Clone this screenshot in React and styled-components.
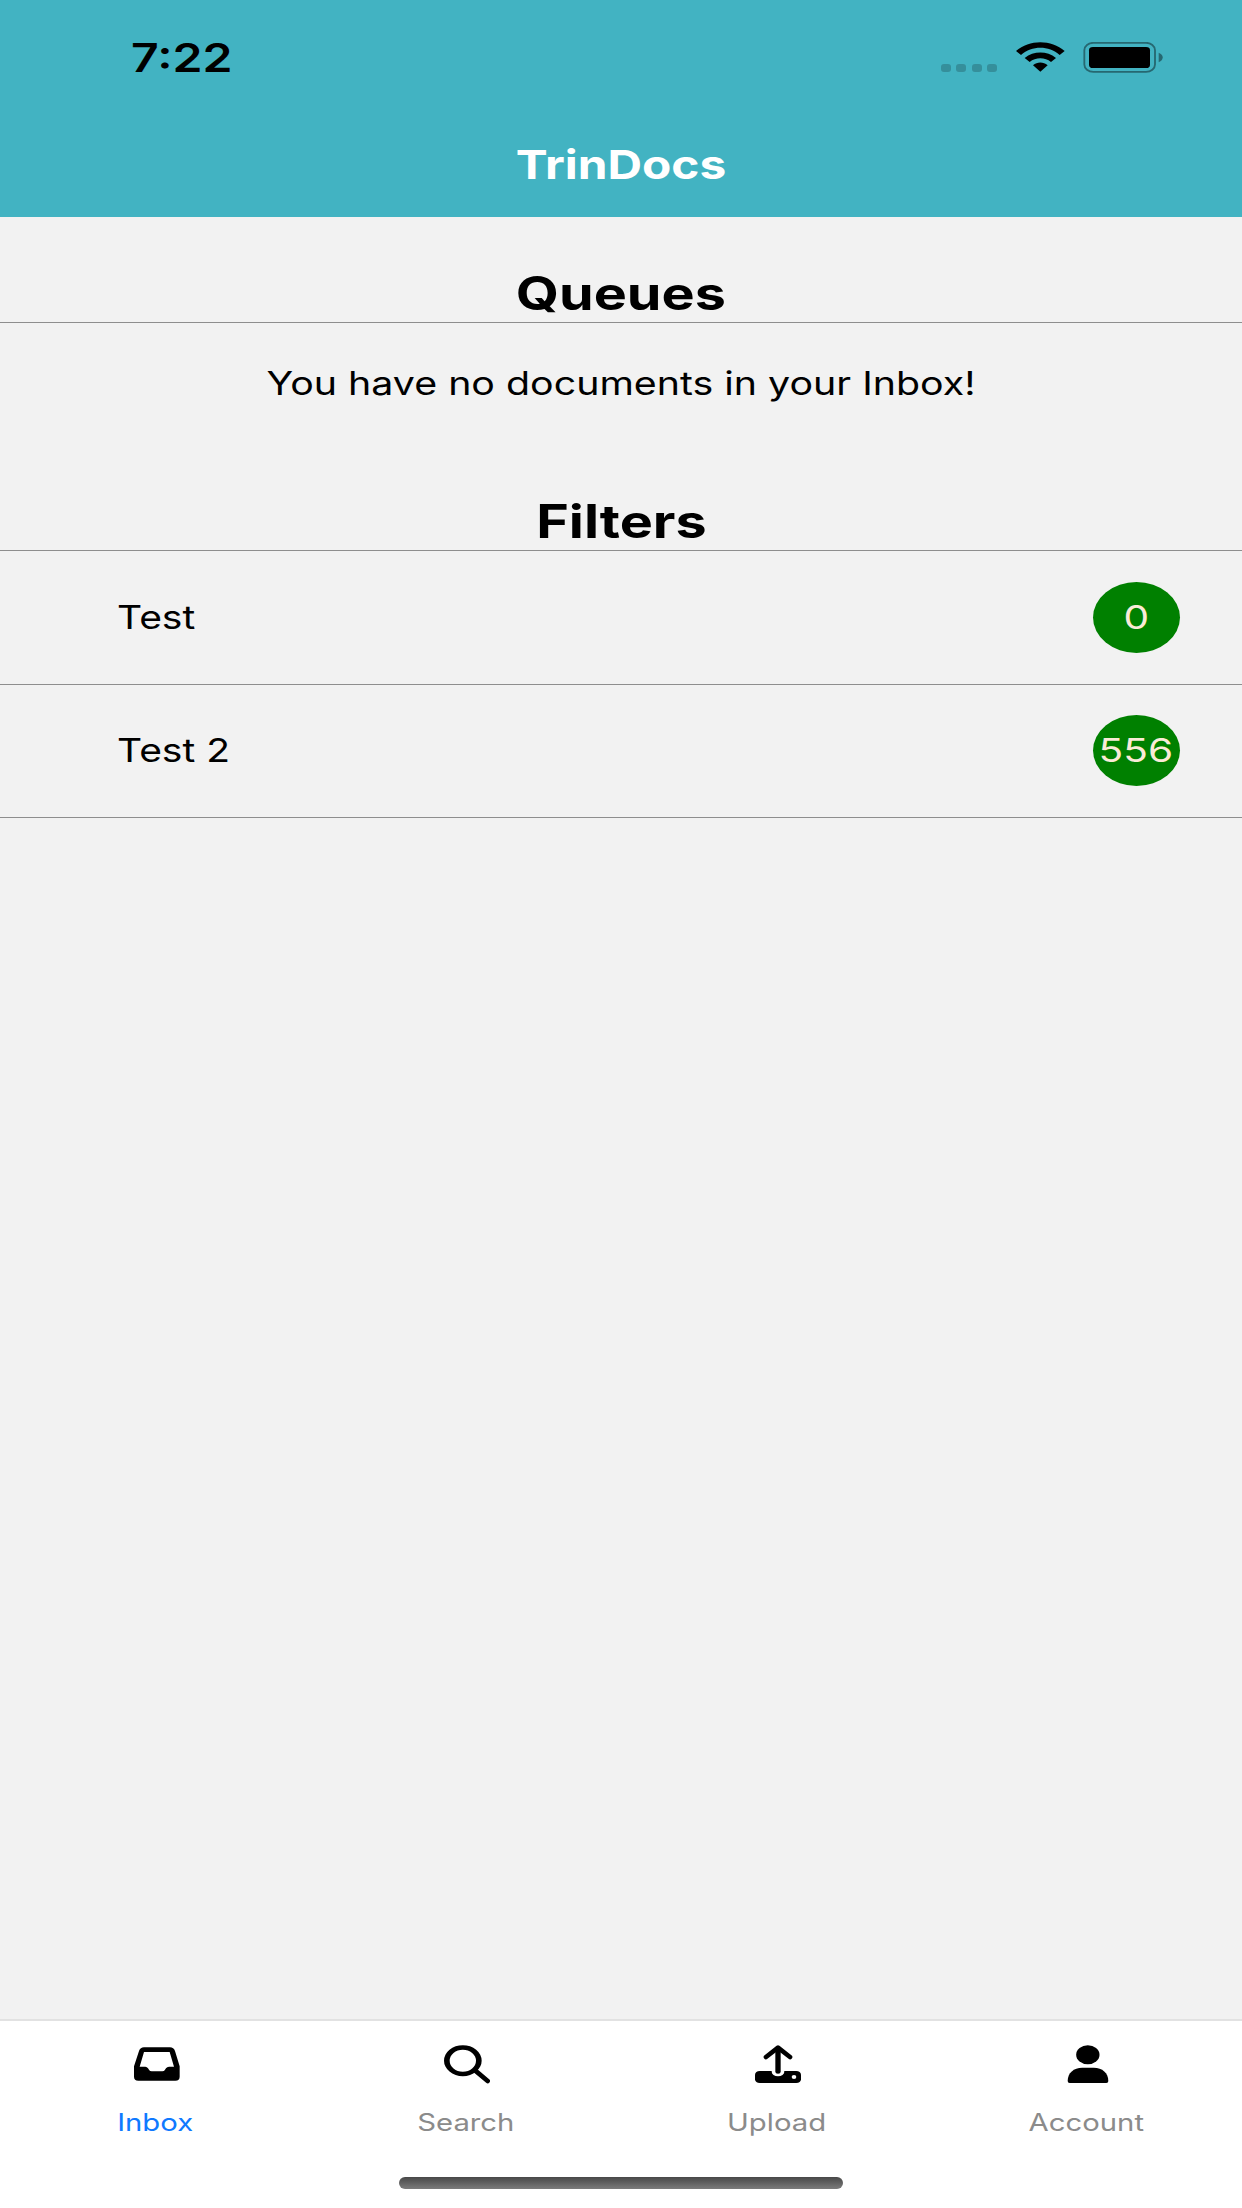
import React, { useState } from "react";
import styled, { createGlobalStyle } from "styled-components";

const filters = [
  { name: "Test", count: 0 },
  { name: "Test 2", count: 556 },
];

const InboxIcon = () => (
  <TabIcon viewBox="132 120 138 116">
    <path
      fillRule="evenodd"
      d="M162 127H240Q251 127 255 138L269 184V215Q269 227 256 227H145Q132 227 132 215V184L147 138Q151 127 162 127ZM162 141L149 185H166Q171 185 174 190L178 196Q180 199 185 199H217Q222 199 224 196L228 190Q231 185 237 185H252L239 141Z"
    />
  </TabIcon>
);

const SearchIcon = () => (
  <TabIcon viewBox="162 120 138 116">
    <path
      fillRule="evenodd"
      d="M162 167A56.5 46.5 0 1 0 275 167A56.5 46.5 0 1 0 162 167ZM179 167A39.5 33 0 1 1 258 167A39.5 33 0 1 1 179 167Z"
    />
    <path d="M256 197L293 228" stroke="#000" strokeWidth="14" strokeLinecap="round" />
  </TabIcon>
);

const UploadIcon = () => (
  <TabIcon viewBox="164 120 138 116">
    <rect x="164" y="198" width="138" height="36" rx="14" ry="11" />
    <ellipse cx="233" cy="200" rx="19" ry="14" fill="#fff" />
    <ellipse cx="281" cy="216" rx="7" ry="6" fill="#fff" />
    <rect x="225" y="124" width="16" height="82" rx="8" ry="6" />
    <path
      d="M197 156L233 128L269 156"
      fill="none"
      stroke="#000"
      strokeWidth="14"
      strokeLinecap="round"
      strokeLinejoin="round"
    />
  </TabIcon>
);

const AccountIcon = () => (
  <TabIcon viewBox="166 120 138 116">
    <ellipse cx="234.500" cy="149" rx="35" ry="28.500" />
    <path d="M174 228C174 204 192 188 218 188H252C278 188 296 204 296 228Q296 234 290 234H180Q174 234 174 228Z" />
  </TabIcon>
);

const tabs = [
  { name: "Inbox", icon: InboxIcon },
  { name: "Search", icon: SearchIcon },
  { name: "Upload", icon: UploadIcon },
  { name: "Account", icon: AccountIcon },
];

const App = () => {
  const [active, setActive] = useState("Inbox");

  return (
    <Screen>
      <GlobalStyle />
      <Header>
        <StatusBar>
          <Time $scale={1.235}>7:22</Time>
          <StatusIcons>
            <Dots>
              <i />
              <i />
              <i />
              <i />
            </Dots>
            <svg width="49" height="30" viewBox="288 68 147 90">
              <path d="M288 95C328 60 394 60 434 95L419 107C386 78 336 78 303 107Z" />
              <path d="M314 116C341 94 381 94 408 116L393 128C375 113 347 113 329 128Z" />
              <path d="M339 138C352 127 370 127 383 138L361 157Z" />
            </svg>
            <svg width="80" height="31" viewBox="489 66 240 93">
              <rect
                x="493"
                y="68.500"
                width="212"
                height="87"
                rx="27"
                ry="22"
                fill="none"
                stroke="#266871"
                strokeWidth="5.500"
              />
              <rect x="507" y="81" width="183" height="63" rx="12" ry="10" />
              <path d="M716 98Q728 103 728 112Q728 122 716 127Z" fill="#266871" />
            </svg>
          </StatusIcons>
        </StatusBar>
        <Title $scale={1.195}>TrinDocs</Title>
      </Header>
      <Main>
        <Section $height={106}>
          <SectionTitle>Queues</SectionTitle>
        </Section>
        <Message $scale={1.21}>You have no documents in your Inbox!</Message>
        <Section $height={108}>
          <SectionTitle>Filters</SectionTitle>
        </Section>
        {filters.map((filter) => (
          <FilterRow key={filter.name}>
            <FilterName $scale={1.2}>{filter.name}</FilterName>
            <Badge>
              <Count $scale={1.25}>{filter.count}</Count>
            </Badge>
          </FilterRow>
        ))}
      </Main>
      <TabBar>
        <Tabs>
          {tabs.map(({ name, icon: Icon }) => (
            <Tab key={name} onClick={() => setActive(name)}>
              <Icon />
              <TabLabel $active={active === name}>{name}</TabLabel>
            </Tab>
          ))}
        </Tabs>
        <HomeIndicator />
      </TabBar>
    </Screen>
  );
};

const GlobalStyle = createGlobalStyle`
  * {
    box-sizing: border-box;
  }
  body {
    margin: 0;
    font-family: Inter, "Liberation Sans", sans-serif;
  }
`;

const Screen = styled.div`
  display: flex;
  flex-direction: column;
  width: 1242px;
  height: 2208px;
  overflow: hidden;
  background: #f2f2f2;
  color: #000;
`;

const Header = styled.header`
  height: 217px;
  background: #42b3c2;
`;

const StatusBar = styled.div`
  display: flex;
  justify-content: space-between;
  height: 116px;
  padding: 0 79px 0 131px;
`;

const Wide = styled.span`
  display: block;
  white-space: nowrap;
  transform: scaleX(${(props) => props.$scale || 1.22});
`;

const Time = styled(Wide)`
  padding-top: 34px;
  font-size: 39px;
  font-weight: 600;
  line-height: 48px;
  transform-origin: left;
`;

const StatusIcons = styled.div`
  display: flex;
  align-items: flex-start;
  padding-top: 42px;

  svg + svg {
    margin-left: 18px;
  }
`;

const Dots = styled.div`
  display: flex;
  gap: 5.5px;
  margin: 22px 19px 0 0;

  i {
    width: 10px;
    height: 8px;
    border-radius: 3px;
    background: #358f9b;
  }
`;

const Title = styled(Wide)`
  color: #fff;
  font-size: 40px;
  font-weight: 700;
  line-height: 98px;
  text-align: center;
`;

const Main = styled.main`
  flex: 1;
`;

const Section = styled.div`
  display: flex;
  align-items: flex-end;
  justify-content: center;
  height: ${(props) => props.$height}px;
  padding-bottom: 1px;
  border-bottom: 1px solid #8e8e8e;
`;

const SectionTitle = styled.h1`
  margin: 0;
  font-size: 46px;
  font-weight: 700;
  line-height: 56px;
  transform: scaleX(1.21);
`;

const Message = styled(Wide)`
  height: 120px;
  padding-top: 41px;
  font-size: 32.5px;
  line-height: 40px;
  text-align: center;
`;

const FilterRow = styled.div`
  display: flex;
  align-items: center;
  justify-content: space-between;
  height: 133.5px;
  padding: 0 62px 0 117px;
  border-bottom: 1px solid #8e8e8e;
`;

const FilterName = styled(Wide)`
  font-size: 32.5px;
  transform-origin: left;
`;

const Badge = styled.div`
  display: flex;
  align-items: center;
  justify-content: center;
  width: 87px;
  height: 71px;
  border-radius: 50%;
  background: #008000;
`;

const Count = styled(Wide)`
  margin-right: 1px;
  color: #faebd7;
  font-size: 32.5px;
`;

const TabBar = styled.nav`
  height: 189px;
  border-top: 2px solid #e2e2e2;
  background: #fff;
`;

const Tabs = styled.div`
  display: grid;
  grid-template-columns: repeat(4, 1fr);
  height: 156px;
`;

const Tab = styled.button`
  display: flex;
  flex-direction: column;
  align-items: center;
  padding: 24px 0 0;
  border: none;
  background: none;
  font-family: inherit;
`;

const TabIcon = styled.svg`
  width: 46px;
  height: 38.67px;
  margin-left: 3px;
`;

const TabLabel = styled(Wide)`
  margin-top: 24px;
  color: ${(props) => (props.$active ? "#0f79ff" : "#8b8b8b")};
  font-size: 24px;
  line-height: 30px;
`;

const HomeIndicator = styled.div`
  width: 444px;
  height: 12px;
  margin: 0 auto;
  border-radius: 7px;
  background: linear-gradient(#484848, #7c7c7c);
`;

export default App;
